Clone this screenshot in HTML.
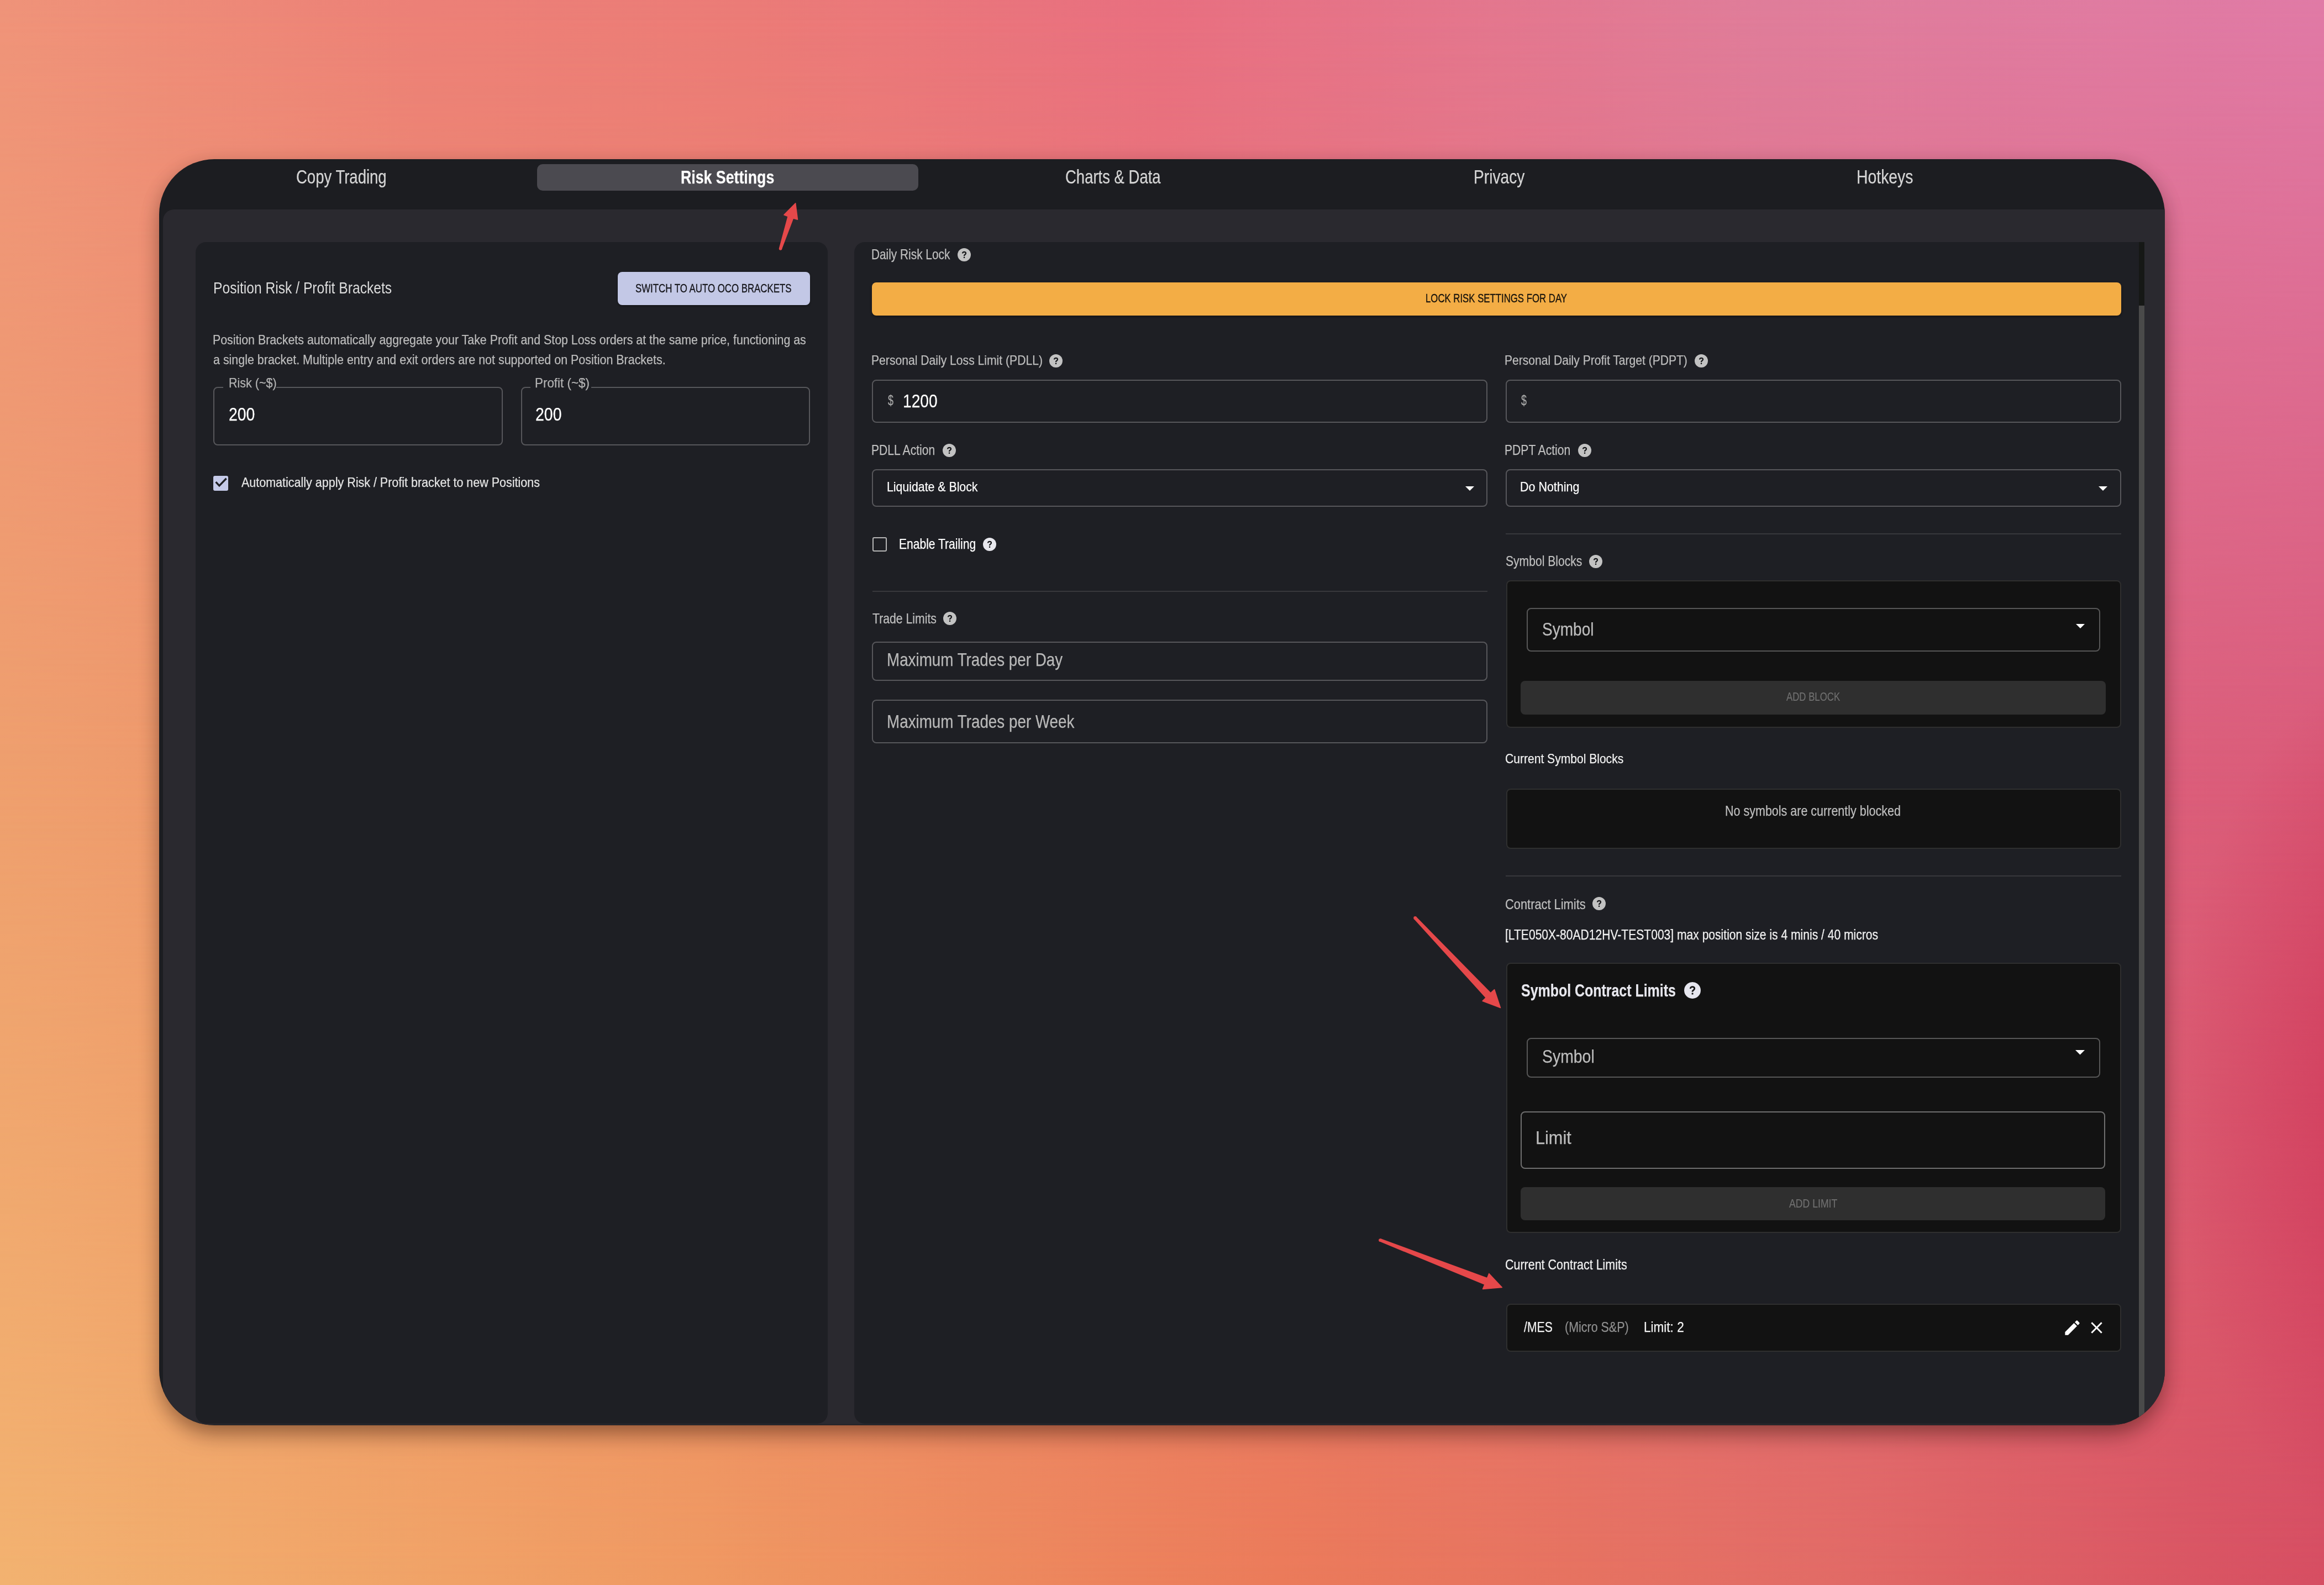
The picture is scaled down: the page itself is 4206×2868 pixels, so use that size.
<!DOCTYPE html>
<html><head><meta charset="utf-8"><style>
html,body{margin:0;padding:0}
body{width:4206px;height:2868px;position:relative;overflow:hidden;font-family:"Liberation Sans",sans-serif;
background:#e98a6f}
.bg0,.bg1,.bg2{position:absolute;left:0;top:0;width:4206px;height:2868px}
.bg0{background:linear-gradient(90deg,#efa06e 0%,#ee8e68 25%,#ea7c70 50%,#e06a80 75%,#da5a78 100%)}
.bg1{background:linear-gradient(90deg,#ef9379 0%,#ec8077 18%,#eb7b77 32%,#e86f80 50%,#df7d9a 76%,#e07aa6 100%);
 -webkit-mask-image:linear-gradient(180deg,#000 0px,transparent 1434px);mask-image:linear-gradient(180deg,#000 0px,transparent 1434px)}
.bg2{background:linear-gradient(90deg,#f2b270 0%,#ef9962 30%,#eb7b5a 55%,#e26c66 78%,#d64e62 100%);
 -webkit-mask-image:linear-gradient(180deg,transparent 1434px,#000 2868px);mask-image:linear-gradient(180deg,transparent 1434px,#000 2868px)}
.bg3{position:absolute;left:0;top:0;width:4206px;height:2868px;background:radial-gradient(ellipse 420px 800px at 4350px 2000px, rgba(208,56,88,.85) 0%, rgba(208,56,88,.5) 45%, rgba(208,56,88,0) 100%)}
.win{position:absolute;left:288px;top:288px;width:3630px;height:2291px;background:#1c1d21;border-radius:100px;
 box-shadow:0 24px 44px -10px rgba(40,12,0,.36), 0 8px 34px rgba(30,8,0,.2)}
.b{position:absolute}
.ic{position:absolute;overflow:visible}
.t{position:absolute;white-space:nowrap;line-height:1;transform-origin:0 0;-webkit-text-stroke:0.25px currentColor}
.hi{position:absolute;border-radius:50%}
.hi svg{display:block}
</style></head>
<body>
<div class="bg0"></div><div class="bg1"></div><div class="bg2"></div><div class="bg3"></div>
<div class="win"></div>
<div class="clip" style="position:absolute;left:0;top:0;width:4206px;height:2868px;clip-path:inset(288px 288px 289px 288px round 100px)">
<div class="b" style="left:295px;top:379px;width:3623px;height:2199px;background:#2a292f;border-top-left-radius:20px"></div>
<div class="b" style="left:972px;top:297px;width:690px;height:48px;background:#4b4a50;border-radius:10px"></div>
<div class="b" style="left:354px;top:438px;width:1144px;height:2138px;background:#1e1f24;border-radius:19px 19px 19px 19px"></div>
<div class="b" style="left:1546px;top:438px;width:2325px;height:2138px;background:#1e1f24;border-radius:19px 0 0 19px"></div>
<div class="b" style="left:3871px;top:438px;width:10px;height:115px;background:#161816"></div>
<div class="b" style="left:3871px;top:553px;width:10px;height:2027px;background:#4a4a4a"></div>
<div class="b" style="left:1118px;top:492px;width:348px;height:60px;background:#c3c8e6;border-radius:8px;box-shadow:0 2px 3px rgba(0,0,0,.35)"></div>
<div class="b" style="left:386px;top:700.3px;width:524px;height:105.30000000000007px;border:2px solid #57575b;border-radius:8px;box-sizing:border-box"></div>
<div class="b" style="left:942.5px;top:700.3px;width:523.5px;height:105.30000000000007px;border:2px solid #57575b;border-radius:8px;box-sizing:border-box"></div>
<div class="b" style="left:404px;top:695px;width:96px;height:11px;background:#1e1f24"></div>
<div class="b" style="left:960px;top:695px;width:110px;height:11px;background:#1e1f24"></div>
<div class="b" style="left:386.3px;top:860.5px;width:27.19999999999999px;height:27.100000000000023px;background:#c5cae9;border-radius:3px"></div>
<svg class="ic" style="left:386px;top:860px" width="28" height="28" viewBox="0 0 28 28"><path d="M4.6 12.2L10.9 18.9 23.6 5.8" stroke="#1e1f24" stroke-width="3.4" fill="none"/></svg>
<svg class="ic" style="left:1733.0px;top:449.0px" width="24" height="24" viewBox="0 0 24 24"><circle cx="12" cy="12" r="12" fill="#c2c2c2"/><path d="M9.0 9.6C9.0 7.9 10.3 6.9 12 6.9c1.8 0 3.0 1.0 3.0 2.5 0 1.8-2.2 2.3-2.9 3.8l-.1.9" fill="none" stroke="#141518" stroke-width="2.2"/><rect x="10.9" y="15.6" width="2.3" height="2.3" rx=".4" fill="#141518"/></svg>
<div class="b" style="left:1578px;top:511px;width:2261px;height:60px;background:#f3ad45;border-radius:8px;box-shadow:0 2px 4px rgba(0,0,0,.4)"></div>
<svg class="ic" style="left:1899.0px;top:641.0px" width="24" height="24" viewBox="0 0 24 24"><circle cx="12" cy="12" r="12" fill="#c2c2c2"/><path d="M9.0 9.6C9.0 7.9 10.3 6.9 12 6.9c1.8 0 3.0 1.0 3.0 2.5 0 1.8-2.2 2.3-2.9 3.8l-.1.9" fill="none" stroke="#141518" stroke-width="2.2"/><rect x="10.9" y="15.6" width="2.3" height="2.3" rx=".4" fill="#141518"/></svg>
<svg class="ic" style="left:3067.0px;top:641.0px" width="24" height="24" viewBox="0 0 24 24"><circle cx="12" cy="12" r="12" fill="#c2c2c2"/><path d="M9.0 9.6C9.0 7.9 10.3 6.9 12 6.9c1.8 0 3.0 1.0 3.0 2.5 0 1.8-2.2 2.3-2.9 3.8l-.1.9" fill="none" stroke="#141518" stroke-width="2.2"/><rect x="10.9" y="15.6" width="2.3" height="2.3" rx=".4" fill="#141518"/></svg>
<div class="b" style="left:1578px;top:686.5px;width:1114px;height:78.5px;border:2px solid #57575b;border-radius:8px;box-sizing:border-box"></div>
<div class="b" style="left:2725px;top:686.5px;width:1114px;height:78.5px;border:2px solid #57575b;border-radius:8px;box-sizing:border-box"></div>
<svg class="ic" style="left:1706.0px;top:803.0px" width="24" height="24" viewBox="0 0 24 24"><circle cx="12" cy="12" r="12" fill="#c2c2c2"/><path d="M9.0 9.6C9.0 7.9 10.3 6.9 12 6.9c1.8 0 3.0 1.0 3.0 2.5 0 1.8-2.2 2.3-2.9 3.8l-.1.9" fill="none" stroke="#141518" stroke-width="2.2"/><rect x="10.9" y="15.6" width="2.3" height="2.3" rx=".4" fill="#141518"/></svg>
<svg class="ic" style="left:2856.0px;top:803.0px" width="24" height="24" viewBox="0 0 24 24"><circle cx="12" cy="12" r="12" fill="#c2c2c2"/><path d="M9.0 9.6C9.0 7.9 10.3 6.9 12 6.9c1.8 0 3.0 1.0 3.0 2.5 0 1.8-2.2 2.3-2.9 3.8l-.1.9" fill="none" stroke="#141518" stroke-width="2.2"/><rect x="10.9" y="15.6" width="2.3" height="2.3" rx=".4" fill="#141518"/></svg>
<div class="b" style="left:1578px;top:848.6px;width:1114px;height:68.0px;border:2px solid #57575b;border-radius:8px;box-sizing:border-box"></div>
<div class="b" style="left:2725px;top:848.6px;width:1114px;height:68.0px;border:2px solid #57575b;border-radius:8px;box-sizing:border-box"></div>
<svg class="ic" style="left:2652px;top:879.5px" width="16" height="8" viewBox="0 0 16 8"><path d="M0 0h16L8 8z" fill="#ffffff"/></svg>
<svg class="ic" style="left:3798px;top:879.5px" width="16" height="8" viewBox="0 0 16 8"><path d="M0 0h16L8 8z" fill="#ffffff"/></svg>
<div class="b" style="left:1578.6px;top:971.6px;width:26.800000000000182px;height:26.600000000000023px;border:2.5px solid #b5b5b5;border-radius:3px;box-sizing:border-box"></div>
<svg class="ic" style="left:1779.0px;top:973.0px" width="24" height="24" viewBox="0 0 24 24"><circle cx="12" cy="12" r="12" fill="#e8e8ee"/><path d="M9.0 9.6C9.0 7.9 10.3 6.9 12 6.9c1.8 0 3.0 1.0 3.0 2.5 0 1.8-2.2 2.3-2.9 3.8l-.1.9" fill="none" stroke="#141518" stroke-width="2.2"/><rect x="10.9" y="15.6" width="2.3" height="2.3" rx=".4" fill="#141518"/></svg>
<div class="b" style="left:1579px;top:1069px;width:1113px;height:2px;background:#38383c"></div>
<svg class="ic" style="left:1707.0px;top:1107.0px" width="24" height="24" viewBox="0 0 24 24"><circle cx="12" cy="12" r="12" fill="#c2c2c2"/><path d="M9.0 9.6C9.0 7.9 10.3 6.9 12 6.9c1.8 0 3.0 1.0 3.0 2.5 0 1.8-2.2 2.3-2.9 3.8l-.1.9" fill="none" stroke="#141518" stroke-width="2.2"/><rect x="10.9" y="15.6" width="2.3" height="2.3" rx=".4" fill="#141518"/></svg>
<div class="b" style="left:1578px;top:1161px;width:1114px;height:70.5px;border:2px solid #57575b;border-radius:8px;box-sizing:border-box"></div>
<div class="b" style="left:1578px;top:1265.5px;width:1114px;height:79.0px;border:2px solid #57575b;border-radius:8px;box-sizing:border-box"></div>
<div class="b" style="left:2725px;top:965px;width:1114px;height:2px;background:#38383c"></div>
<svg class="ic" style="left:2876.0px;top:1004.0px" width="24" height="24" viewBox="0 0 24 24"><circle cx="12" cy="12" r="12" fill="#c2c2c2"/><path d="M9.0 9.6C9.0 7.9 10.3 6.9 12 6.9c1.8 0 3.0 1.0 3.0 2.5 0 1.8-2.2 2.3-2.9 3.8l-.1.9" fill="none" stroke="#141518" stroke-width="2.2"/><rect x="10.9" y="15.6" width="2.3" height="2.3" rx=".4" fill="#141518"/></svg>
<div class="b" style="left:2725.5px;top:1050px;width:1113.5px;height:267px;background:#121212;border:2px solid #2f2f2f;border-radius:8px;box-sizing:border-box"></div>
<div class="b" style="left:2763.3px;top:1100px;width:1037.6999999999998px;height:78.5px;border:2px solid #575757;border-radius:8px;box-sizing:border-box"></div>
<svg class="ic" style="left:3757px;top:1129px" width="16" height="8" viewBox="0 0 16 8"><path d="M0 0h16L8 8z" fill="#ffffff"/></svg>
<div class="b" style="left:2752px;top:1232px;width:1059px;height:61px;background:#2f2f2f;border-radius:8px"></div>
<div class="b" style="left:2725.5px;top:1427px;width:1113.5px;height:108.5px;background:#121212;border:2px solid #2f2f2f;border-radius:8px;box-sizing:border-box"></div>
<div class="b" style="left:2725px;top:1584px;width:1114px;height:2px;background:#38383c"></div>
<svg class="ic" style="left:2881.5px;top:1623.0px" width="24" height="24" viewBox="0 0 24 24"><circle cx="12" cy="12" r="12" fill="#c2c2c2"/><path d="M9.0 9.6C9.0 7.9 10.3 6.9 12 6.9c1.8 0 3.0 1.0 3.0 2.5 0 1.8-2.2 2.3-2.9 3.8l-.1.9" fill="none" stroke="#141518" stroke-width="2.2"/><rect x="10.9" y="15.6" width="2.3" height="2.3" rx=".4" fill="#141518"/></svg>
<div class="b" style="left:2725.5px;top:1742px;width:1113.5px;height:489px;background:#121212;border:2px solid #2f2f2f;border-radius:8px;box-sizing:border-box"></div>
<svg class="ic" style="left:3048.0px;top:1777.0px" width="30" height="30" viewBox="0 0 24 24"><circle cx="12" cy="12" r="12" fill="#e6e6ee"/><path d="M9.0 9.6C9.0 7.9 10.3 6.9 12 6.9c1.8 0 3.0 1.0 3.0 2.5 0 1.8-2.2 2.3-2.9 3.8l-.1.9" fill="none" stroke="#121212" stroke-width="2.2"/><rect x="10.9" y="15.6" width="2.3" height="2.3" rx=".4" fill="#121212"/></svg>
<div class="b" style="left:2763px;top:1878px;width:1038px;height:71.5px;border:2px solid #575757;border-radius:8px;box-sizing:border-box"></div>
<svg class="ic" style="left:3756px;top:1900px" width="17" height="8.5" viewBox="0 0 16 8"><path d="M0 0h16L8 8z" fill="#ffffff"/></svg>
<div class="b" style="left:2752px;top:2011px;width:1058px;height:103.5px;border:2px solid #6f6f6f;border-radius:8px;box-sizing:border-box"></div>
<div class="b" style="left:2752px;top:2148px;width:1058px;height:60px;background:#2f2f2f;border-radius:8px"></div>
<div class="b" style="left:2725.5px;top:2358.5px;width:1113.5px;height:87.0px;background:#121212;border:2px solid #2f2f2f;border-radius:8px;box-sizing:border-box"></div>
<svg class="ic" style="left:3733px;top:2385px" width="35" height="35" viewBox="0 0 24 24"><path fill="#ffffff" d="M3 17.25V21h3.75L17.81 9.94l-3.75-3.75L3 17.25zM20.71 7.04c.39-.39.39-1.02 0-1.41l-2.34-2.34a.996.996 0 0 0-1.41 0l-1.83 1.83 3.75 3.75 1.83-1.83z"/></svg>
<svg class="ic" style="left:3777px;top:2385px" width="35" height="35" viewBox="0 0 24 24"><path fill="#ffffff" d="M19 6.41 17.59 5 12 10.59 6.41 5 5 6.41 10.59 12 5 17.59 6.41 19 12 13.41 17.59 19 19 17.59 13.41 12z"/></svg>
<div class="t" style="left:536.31px;top:303.01px;font-size:34.59px;color:#d5d5d5;font-weight:400;transform:scaleX(0.7958);">Copy Trading</div>
<div class="t" style="left:1232.13px;top:303.65px;font-size:33.72px;color:#ffffff;font-weight:700;transform:scaleX(0.7923);">Risk Settings</div>
<div class="t" style="left:1927.71px;top:303.01px;font-size:34.59px;color:#d5d5d5;font-weight:400;transform:scaleX(0.7950);">Charts &amp; Data</div>
<div class="t" style="left:2666.60px;top:303.01px;font-size:34.59px;color:#d5d5d5;font-weight:400;transform:scaleX(0.8148);">Privacy</div>
<div class="t" style="left:3360.38px;top:303.01px;font-size:34.59px;color:#d5d5d5;font-weight:400;transform:scaleX(0.8203);">Hotkeys</div>
<div class="t" style="left:385.57px;top:506.32px;font-size:29.51px;color:#dcdcdc;font-weight:400;transform:scaleX(0.8352);-webkit-text-stroke:0">Position Risk / Profit Brackets</div>
<div class="t" style="left:1150.47px;top:511.03px;font-size:21.22px;color:#15151a;font-weight:400;transform:scaleX(0.7931);-webkit-text-stroke:0.35px #15151a">SWITCH TO AUTO OCO BRACKETS</div>
<div class="t" style="left:384.83px;top:603.76px;font-size:23.55px;color:#bdbdbd;font-weight:400;transform:scaleX(0.9068);">Position Brackets automatically aggregate your Take Profit and Stop Loss orders at the same price, functioning as</div>
<div class="t" style="left:385.83px;top:639.96px;font-size:23.55px;color:#bdbdbd;font-weight:400;transform:scaleX(0.9104);">a single bracket. Multiple entry and exit orders are not supported on Position Brackets.</div>
<div class="t" style="left:413.52px;top:681.38px;font-size:24.71px;color:#b4b4b4;font-weight:400;transform:scaleX(0.8699);">Risk (~$)</div>
<div class="t" style="left:413.67px;top:733.91px;font-size:32.70px;color:#ffffff;font-weight:400;transform:scaleX(0.8694);">200</div>
<div class="t" style="left:968.25px;top:681.38px;font-size:24.71px;color:#b4b4b4;font-weight:400;transform:scaleX(0.9060);">Profit (~$)</div>
<div class="t" style="left:969.16px;top:733.91px;font-size:32.70px;color:#ffffff;font-weight:400;transform:scaleX(0.8714);">200</div>
<div class="t" style="left:437.20px;top:861.42px;font-size:24.42px;color:#e6e6e6;font-weight:400;transform:scaleX(0.8806);">Automatically apply Risk / Profit bracket to new Positions</div>
<div class="t" style="left:1577.37px;top:448.06px;font-size:25.44px;color:#bfbfbf;font-weight:400;transform:scaleX(0.8185);">Daily Risk Lock</div>
<div class="t" style="left:2579.99px;top:529.69px;font-size:21.51px;color:#17130c;font-weight:400;transform:scaleX(0.7803);-webkit-text-stroke:0.35px #17130c">LOCK RISK SETTINGS FOR DAY</div>
<div class="t" style="left:1577.35px;top:639.58px;font-size:24.71px;color:#bfbfbf;font-weight:400;transform:scaleX(0.8552);">Personal Daily Loss Limit (PDLL)</div>
<div class="t" style="left:2723.35px;top:639.58px;font-size:24.71px;color:#bfbfbf;font-weight:400;transform:scaleX(0.8526);">Personal Daily Profit Target (PDPT)</div>
<div class="t" style="left:1607.00px;top:711.49px;font-size:26.00px;color:#a8a8a8;font-weight:400;transform:scaleX(0.6892);">$</div>
<div class="t" style="left:2753.00px;top:711.49px;font-size:26.00px;color:#a8a8a8;font-weight:400;transform:scaleX(0.6892);">$</div>
<div class="t" style="left:1633.64px;top:709.06px;font-size:32.99px;color:#ffffff;font-weight:400;transform:scaleX(0.8537);">1200</div>
<div class="t" style="left:1577.35px;top:802.01px;font-size:25.15px;color:#bfbfbf;font-weight:400;transform:scaleX(0.8380);">PDLL Action</div>
<div class="t" style="left:2723.35px;top:802.01px;font-size:25.15px;color:#bfbfbf;font-weight:400;transform:scaleX(0.8395);">PDPT Action</div>
<div class="t" style="left:1605.14px;top:869.08px;font-size:24.71px;color:#ffffff;font-weight:400;transform:scaleX(0.8617);">Liquidate &amp; Block</div>
<div class="t" style="left:2751.32px;top:869.08px;font-size:24.71px;color:#ffffff;font-weight:400;transform:scaleX(0.8687);">Do Nothing</div>
<div class="t" style="left:1627.36px;top:971.99px;font-size:25.29px;color:#ffffff;font-weight:400;transform:scaleX(0.8323);">Enable Trailing</div>
<div class="t" style="left:1578.67px;top:1106.71px;font-size:25.15px;color:#bfbfbf;font-weight:400;transform:scaleX(0.8442);">Trade Limits</div>
<div class="t" style="left:1604.83px;top:1176.69px;font-size:33.43px;color:#b9b9b9;font-weight:400;transform:scaleX(0.8316);">Maximum Trades per Day</div>
<div class="t" style="left:1604.83px;top:1288.89px;font-size:33.43px;color:#b9b9b9;font-weight:400;transform:scaleX(0.8320);">Maximum Trades per Week</div>
<div class="t" style="left:2724.64px;top:1002.79px;font-size:25.29px;color:#bfbfbf;font-weight:400;transform:scaleX(0.8346);">Symbol Blocks</div>
<div class="t" style="left:2791.32px;top:1123.41px;font-size:32.70px;color:#bdbdbd;font-weight:400;transform:scaleX(0.8576);">Symbol</div>
<div class="t" style="left:3233.00px;top:1250.35px;font-size:22.38px;color:#707070;font-weight:400;transform:scaleX(0.7512);-webkit-text-stroke:0.2px #707070">ADD BLOCK</div>
<div class="t" style="left:2724.41px;top:1361.08px;font-size:24.71px;color:#f2f2f2;font-weight:400;transform:scaleX(0.8526);">Current Symbol Blocks</div>
<div class="t" style="left:3122.32px;top:1455.46px;font-size:25.44px;color:#bfbfbf;font-weight:400;transform:scaleX(0.8454);">No symbols are currently blocked</div>
<div class="t" style="left:2723.98px;top:1623.59px;font-size:25.29px;color:#bfbfbf;font-weight:400;transform:scaleX(0.8640);">Contract Limits</div>
<div class="t" style="left:2723.68px;top:1679.46px;font-size:25.44px;color:#f2f2f2;font-weight:400;transform:scaleX(0.8280);">[LTE050X-80AD12HV-TEST003] max position size is 4 minis / 40 micros</div>
<div class="t" style="left:2752.61px;top:1776.54px;font-size:31.25px;color:#e8e8ee;font-weight:700;transform:scaleX(0.7980);">Symbol Contract Limits</div>
<div class="t" style="left:2791.11px;top:1896.31px;font-size:32.70px;color:#bdbdbd;font-weight:400;transform:scaleX(0.8690);">Symbol</div>
<div class="t" style="left:2778.60px;top:2043.31px;font-size:32.70px;color:#bdbdbd;font-weight:400;transform:scaleX(0.9384);">Limit</div>
<div class="t" style="left:3238.00px;top:2166.65px;font-size:22.38px;color:#707070;font-weight:400;transform:scaleX(0.7888);-webkit-text-stroke:0.2px #707070">ADD LIMIT</div>
<div class="t" style="left:2723.99px;top:2276.46px;font-size:25.44px;color:#f2f2f2;font-weight:400;transform:scaleX(0.8439);">Current Contract Limits</div>
<div class="t" style="left:2758.00px;top:2389.46px;font-size:25.44px;color:#f2f2f2;font-weight:400;transform:scaleX(0.8344);">/MES</div>
<div class="t" style="left:2832.49px;top:2389.46px;font-size:25.44px;color:#8f8f8f;font-weight:400;transform:scaleX(0.8434);">(Micro S&amp;P)</div>
<div class="t" style="left:2975.24px;top:2389.46px;font-size:25.44px;color:#f2f2f2;font-weight:400;transform:scaleX(0.8865);">Limit: 2</div>
<svg class="ic" style="left:0;top:0" width="4206" height="2868" viewBox="0 0 4206 2868">
<g fill="#e5484a" stroke="#e5484a" stroke-width="1.5" stroke-linejoin="round">
<polygon points="1410.6,449.2 1426.1,391.6 1418.9,388.9 1439.7,367.7 1443.5,397.2 1435.5,395.1 1414.4,450.6"/><circle cx="1412.5" cy="449.9" r="2"/>
<polygon points="2562.6,1659.4 2697.7,1796.8 2704.6,1790.5 2715.5,1823.6 2683.1,1811.3 2689.2,1805.2 2559.6,1662.4"/><circle cx="2561.1" cy="1660.9" r="2.1"/>
<polygon points="2498.8,2242.0 2691.5,2312.8 2694.8,2304.4 2718.3,2329.6 2683.6,2332.4 2687,2324 2497.2,2245.9"/><circle cx="2498" cy="2244" r="2.1"/>
</g></svg>
</div>
</body></html>
